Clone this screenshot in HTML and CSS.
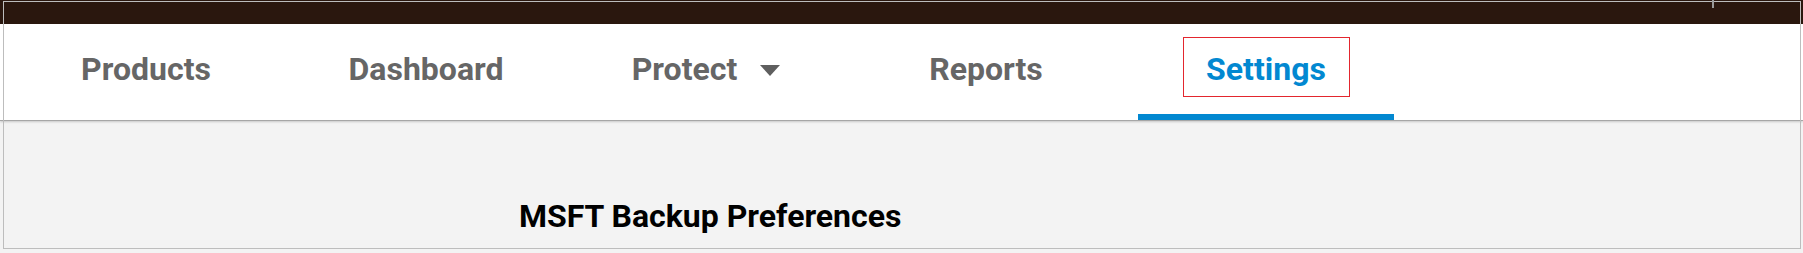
FILE: index.html
```html
<!DOCTYPE html>
<html lang="en">
<head>
<meta charset="utf-8">
<title>Settings</title>
<link rel="stylesheet" href="styles.css">
</head>
<body>
<div class="topbar"></div>
<nav class="nav">
  <ul class="tabs">
    <li class="tab"><span class="label">Products</span></li>
    <li class="tab"><span class="label">Dashboard</span></li>
    <li class="tab"><span class="label">Protect</span><span class="caret"></span></li>
    <li class="tab"><span class="label">Reports</span></li>
    <li class="tab active"><span class="label highlighted">Settings</span></li>
  </ul>
</nav>
<main class="content">
  <h1 class="title">MSFT Backup Preferences</h1>
</main>
<div class="frame"></div>
<div class="tick"></div>
</body>
</html>
```

FILE: styles.css
```css
html, body {
  margin: 0;
  padding: 0;
}
body {
  background: #f3f3f3;
  font-family: Roboto, "Noto Sans", "Liberation Sans", sans-serif;
  height: 253px;
  overflow: hidden;
  position: relative;
}
.topbar {
  height: 24px;
  background: #2a170e;
}
.nav {
  height: 96px;
  background: #ffffff;
  position: relative;
  z-index: 1;
  box-shadow: 0 1px 0 #a6a6a6, 0 2px 2px rgba(0, 0, 0, 0.18);
}
.tabs {
  list-style: none;
  margin: 0;
  padding: 0 0 0 18px;
  display: flex;
  gap: 24px;
  height: 100%;
}
.tab {
  width: 256px;
  height: 96px;
  box-sizing: border-box;
  border-bottom: 6px solid transparent;
  display: flex;
  align-items: center;
  justify-content: center;
  font-size: 32px;
  font-weight: 700;
  color: #666666;
  line-height: normal;
}
.tab.active {
  color: #0288d1;
  border-bottom-color: #0288d1;
}
.label {
  position: relative;
}
.highlighted::after {
  content: "";
  position: absolute;
  top: -13px;
  bottom: -9px;
  left: -23px;
  right: -24px;
  border: 1px solid #e3262e;
}
.caret {
  width: 0;
  height: 0;
  margin-left: 23px;
  margin-top: 2px;
  border-left: 10px solid transparent;
  border-right: 10px solid transparent;
  border-top: 11px solid #5f5f5f;
}
.content {
  padding: 77px 0 0 519px;
}
.title {
  margin: 0;
  font-size: 32px;
  font-weight: 700;
  color: #000000;
  line-height: normal;
}
.frame {
  position: absolute;
  top: 1px;
  left: 3px;
  width: 1796px;
  height: 246px;
  border: 1px solid #bdbdbd;
  pointer-events: none;
  z-index: 2;
}
.tick {
  position: absolute;
  top: 0;
  left: 1712px;
  width: 2px;
  height: 8px;
  background: #9a9a9a;
  z-index: 3;
}
```
